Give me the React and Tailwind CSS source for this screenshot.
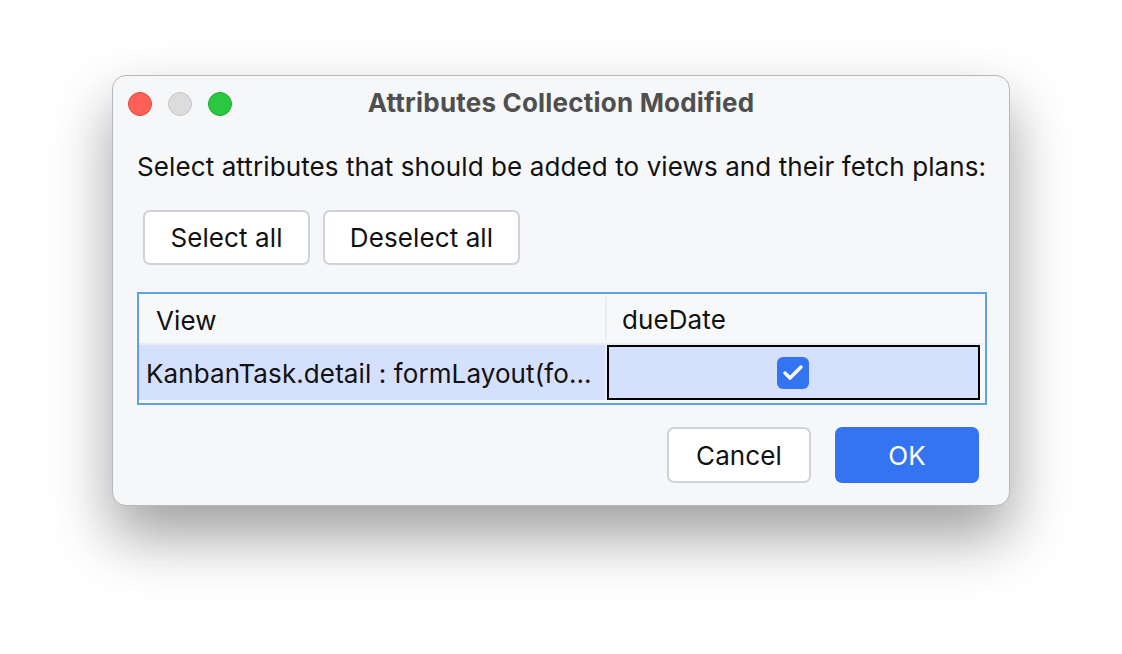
import { Check } from 'lucide-react'

const font = { fontFamily: 'Inter, "Noto Sans", sans-serif' }

const Light = ({ color, border }) => (
  <span className={`block w-[24px] h-[24px] rounded-full border ${color} ${border}`} />
)

export default function App() {
  return (
    <div className="w-full h-[654px] bg-white pt-[75px] pl-[112px]" style={font}>
      <div className="w-[898px] h-[431px] bg-[#f6f7f9] rounded-[14px] border border-[#b8b8b8] shadow-[0_30px_60px_rgba(0,0,0,0.38)] flex flex-col">
        {/* title bar */}
        <div className="relative h-[56px] flex items-center px-[15px] shrink-0">
          <div className="flex gap-[16px]">
            <Light color="bg-[#fe5f57]" border="border-[#e2463f]" />
            <Light color="bg-[#dddcdd]" border="border-[#c8c8c8]" />
            <Light color="bg-[#28c840]" border="border-[#1eaa31]" />
          </div>
          <div className="absolute inset-0 flex items-center justify-center pointer-events-none">
            <span className="text-[26px] font-bold text-[#4f4f4f] tracking-[0.2px] -mt-[3px]">Attributes Collection Modified</span>
          </div>
        </div>

        <div className="px-[24px] flex flex-col text-[26px] tracking-[0.1px]">
          <p className="text-[#111] leading-[30px] mt-[20px] whitespace-nowrap">
            Select attributes that should be added to views and their fetch plans:
          </p>

          <div className="flex gap-[13px] mt-[28px] ml-[6px]">
            <button className="h-[55px] w-[167px] bg-white border-2 border-[#cfd2db] rounded-[7px] text-[#111]">Select all</button>
            <button className="h-[55px] w-[197px] bg-white border-2 border-[#cfd2db] rounded-[7px] text-[#111]">Deselect all</button>
          </div>

          {/* table */}
          <div className="mt-[27px] w-[850px] h-[113px] border-2 border-[#5ba3e6] bg-[#f7f8fa] flex flex-col">
            <div className="h-[51px] flex border-b-2 border-[#ebecf0] shrink-0">
              <div className="w-[468px] flex items-center pl-[17px] pt-[4px] text-[#111] border-r-2 border-[#ebecf0] my-[3px]">View</div>
              <div className="flex-1 flex items-center pl-[15px] pt-[2px] text-[#111]">dueDate</div>
            </div>
            <div className="flex h-[55px] pr-[5px]">
              <div className="w-[466px] bg-[#d4e0fc] flex items-center pl-[7px] pt-[2px] text-[#111] whitespace-nowrap overflow-hidden">
                KanbanTask.detail : formLayout(fo...
              </div>
              <div className="w-[2px] bg-[#ebecf0]" />
              <div className="flex-1 bg-[#d4e0fc] border-2 border-black flex items-center justify-center">
                <span className="w-[32px] h-[32px] rounded-[6px] bg-[#3574f0] flex items-center justify-center -ml-[2px]">
                  <Check className="w-[24px] h-[24px] text-white" strokeWidth={3.5} />
                </span>
              </div>
            </div>
          </div>

          <div className="flex justify-end gap-[24px] mt-[22px] mr-[6px]">
            <button className="h-[56px] w-[144px] bg-white border-2 border-[#cfd2db] rounded-[7px] text-[#111]">Cancel</button>
            <button className="h-[56px] w-[144px] bg-[#3574f0] rounded-[7px] text-white">OK</button>
          </div>
        </div>
      </div>
    </div>
  )
}
